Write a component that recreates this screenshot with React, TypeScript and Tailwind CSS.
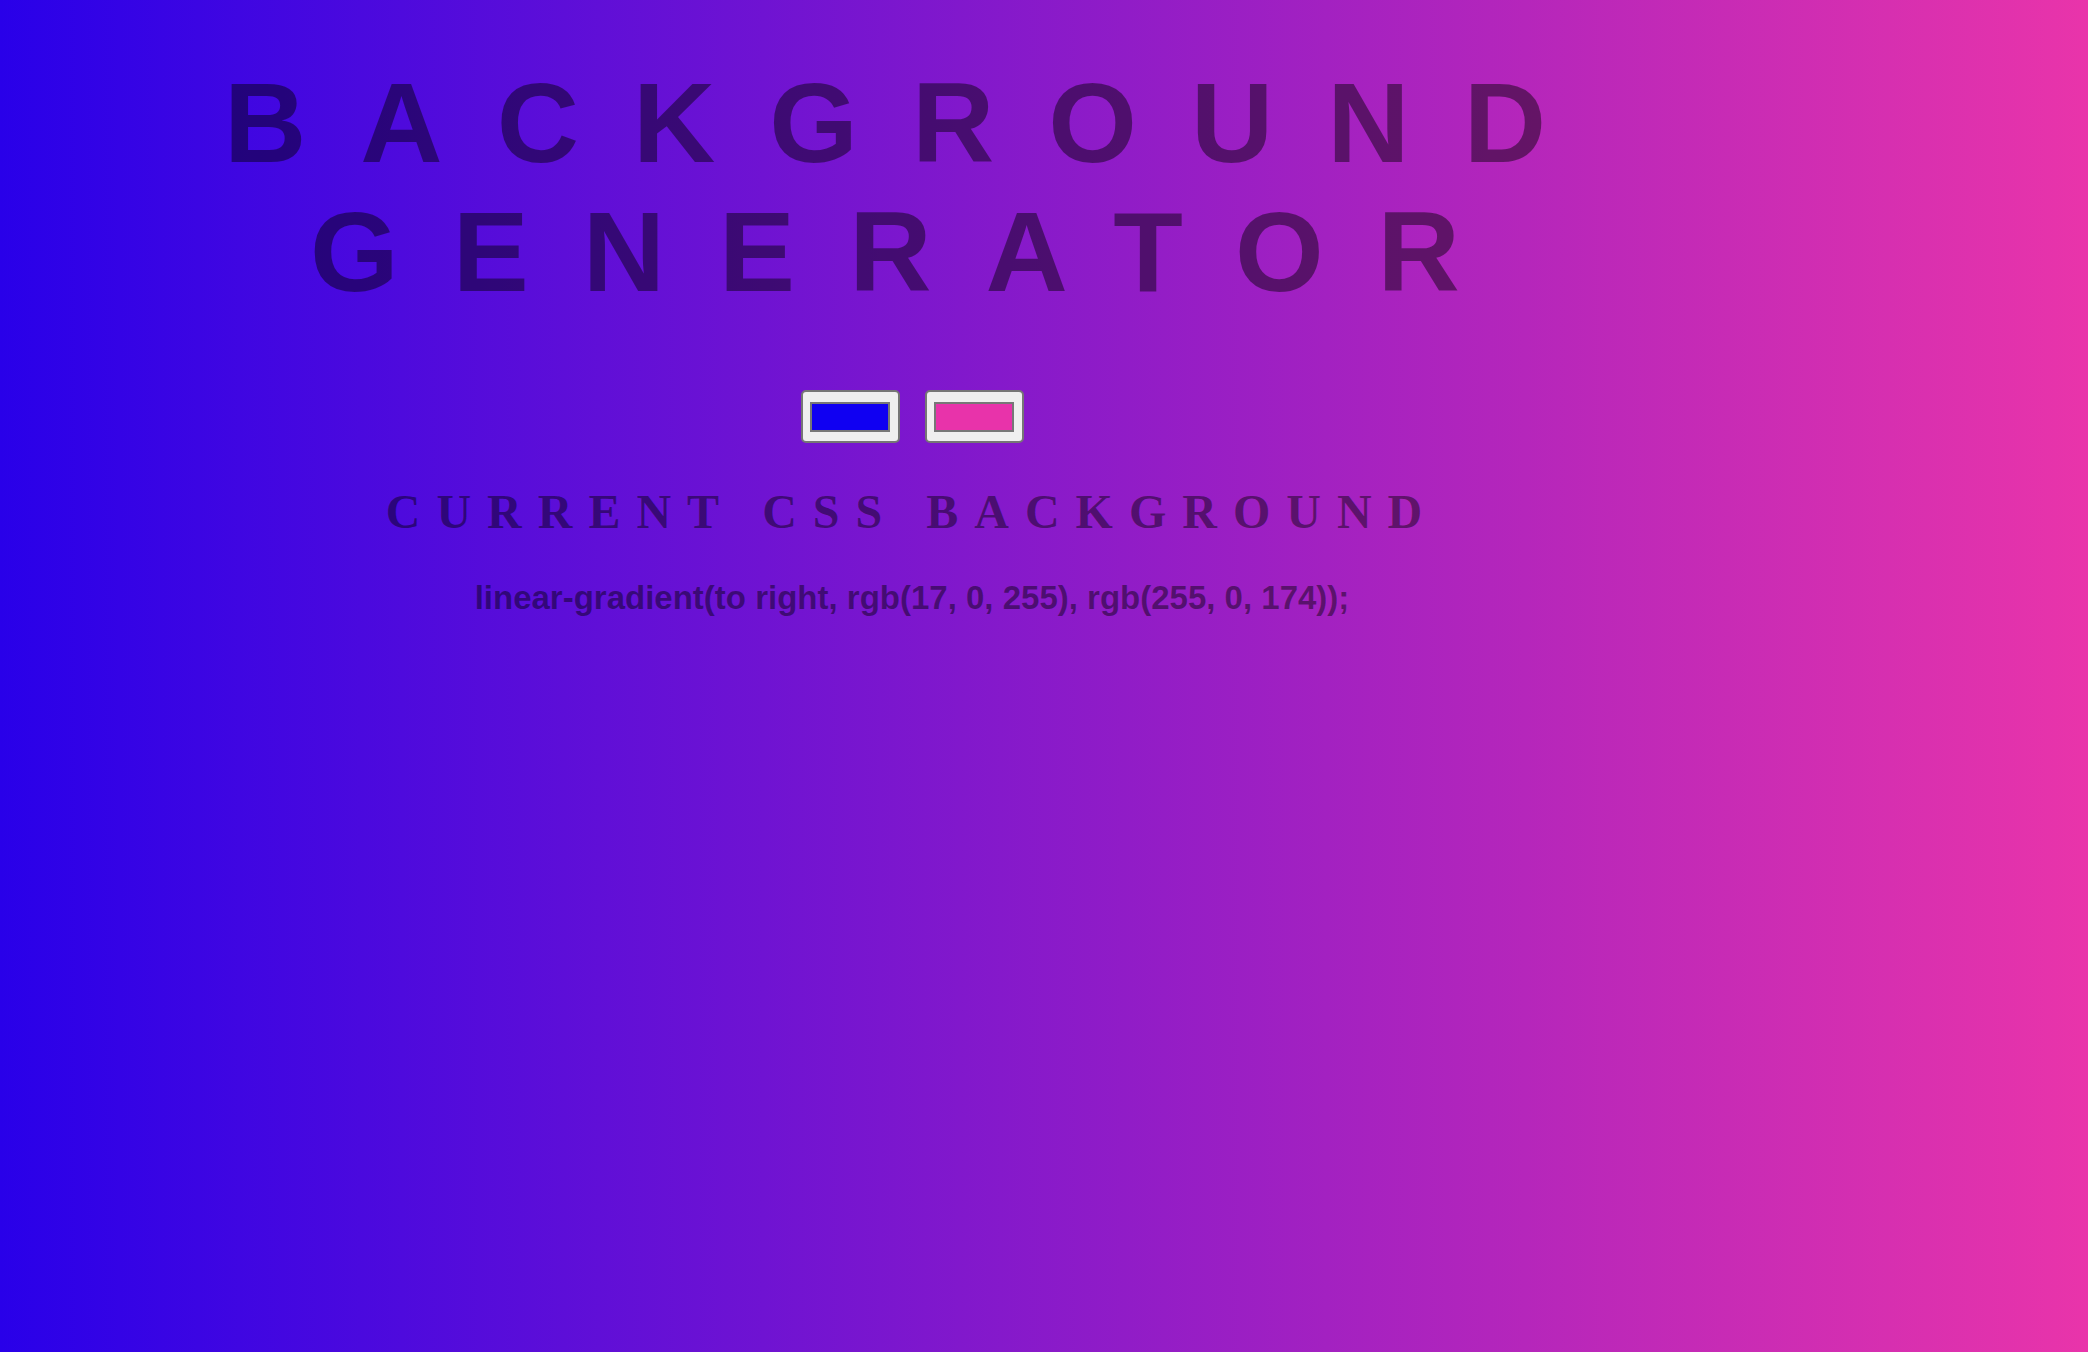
import React from 'react';

const Swatch: React.FC<{ color: string }> = ({ color }) => (
  <div className="w-[99px] h-[53px] rounded-[5px] border-2 border-[#767676] bg-[#efefef] flex items-center justify-center">
    <div className={`w-[80px] h-[30px] border-2 border-[#777777] ${color}`} />
  </div>
);

export default function App() {
  return (
    <div className="min-h-screen w-full bg-[linear-gradient(to_right,#2900e9,#e934aa)]">
      <div className="w-[1824px] flex flex-col items-center text-center">
        <h1 className="pt-[58px] text-[114px] leading-[129px] font-bold tracking-[54px] text-black/45 font-['Liberation_Sans',Arial,sans-serif]">
          BACKGROUND
          <br />
          GENERATOR
        </h1>

        {/* the two colour pickers */}
        <div className="mt-[74px] flex gap-[25px]">
          <Swatch color="bg-[#1000f2]" />
          <Swatch color="bg-[#e833aa]" />
        </div>

        <h3 className="mt-[41px] text-[48px] leading-[normal] font-bold tracking-[16px] text-black/45 font-['Liberation_Serif','Times_New_Roman',serif]">
          CURRENT CSS BACKGROUND
        </h3>

        <p className="mt-[40px] text-[33px] leading-[normal] font-bold text-black/45 font-['Liberation_Sans',Arial,sans-serif]">
          linear-gradient(to right, rgb(17, 0, 255), rgb(255, 0, 174));
        </p>
      </div>
    </div>
  );
}
